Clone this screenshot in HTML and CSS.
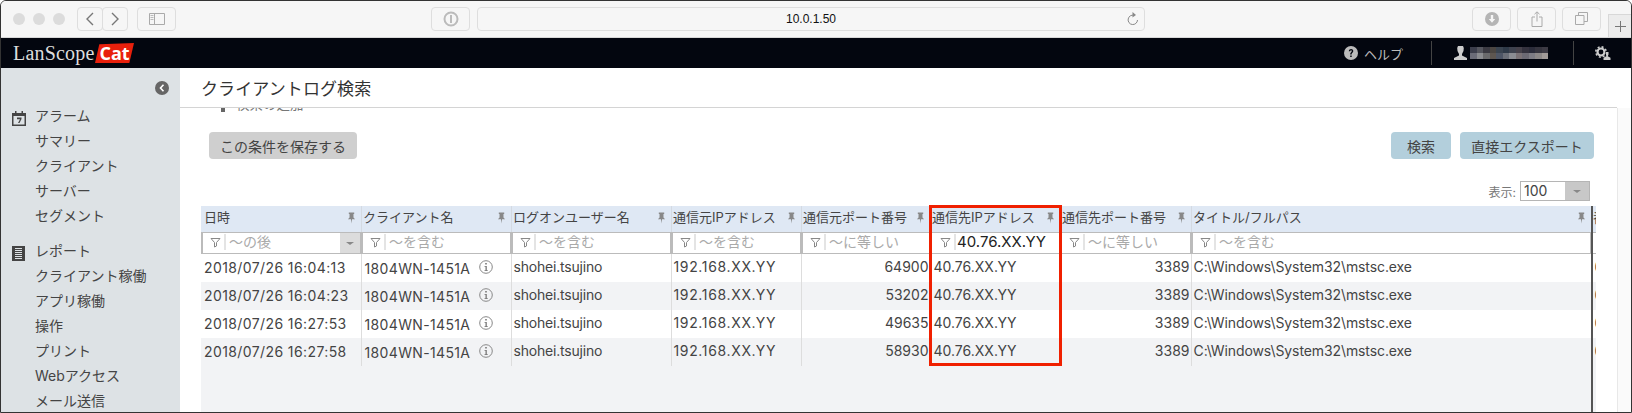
FILE: index.html
```html
<!DOCTYPE html>
<html lang="ja">
<head>
  <meta charset="UTF-8">
  <title>クライアントログ検索</title>
  <link rel="stylesheet" href="styles.css">
</head>
<body>
  <svg class="sprite" width="0" height="0">
    <symbol id="pin" viewBox="0 0 10 12"><path d="M2 0h6v1.500H7.200v4L9 7.500H5.600L5 12l-.6-4.500H1l1.800-2v-4H2z"/></symbol>
    <symbol id="funnel" viewBox="0 0 11 11"><path d="M1 1.500h9L6.500 5.500v3.500l-2 1V5.500z" fill="none" stroke="#888" stroke-width="1"/></symbol>
    <symbol id="info" viewBox="0 0 14 14"><circle cx="7" cy="7" r="6.300" fill="none" stroke="#888" stroke-width="1"/><path d="M6.200 3h1.600v1.500H6.200zM5.500 6h2.300v4.200h1V11h-3.300v-.8h1V6.800h-1z" fill="#777"/></symbol>
  </svg>

  <div class="window">
    <div class="toolbar">
      <div class="lights"><i></i><i></i><i></i></div>
      <div class="nav-buttons">
        <div class="tool-btn nav-btn"><svg width="10" height="16" viewBox="0 0 10 16"><path d="M8 2L2 8l6 6" fill="none" stroke="#777" stroke-width="1.400"/></svg></div>
        <div class="tool-btn nav-btn"><svg width="10" height="16" viewBox="0 0 10 16"><path d="M2 2l6 6-6 6" fill="none" stroke="#777" stroke-width="1.400"/></svg></div>
      </div>
      <div class="tool-btn side-btn"><svg width="16" height="12" viewBox="0 0 16 12"><path d="M.5.500h15v11H.5zM5.500.500v11" fill="none" stroke="#aaa"/><path d="M1.500 2.500h3M1.500 4.500h3M1.500 6.500h3" stroke="#bbb"/></svg></div>
      <div class="center-tools">
        <div class="tool-btn key-btn"><svg width="16" height="16" viewBox="0 0 16 16"><circle cx="8" cy="8" r="6.500" fill="none" stroke="#bbb" stroke-width="2"/><path d="M7 4h2v8H7z" fill="#bbb"/></svg></div>
        <div class="url-bar">
          <span class="url-text">10.0.1.50</span>
          <svg class="reload" width="12" height="15" viewBox="0 0 12 15"><path d="M7 3.300A4.700 4.700 0 1 0 10.500 8" fill="none" stroke="#888"/><path d="M5.500 0l3.500 3-3.500 2.500z" fill="#888"/></svg>
        </div>
      </div>
      <div class="right-tools">
        <div class="tool-btn"><svg width="14" height="14" viewBox="0 0 14 14"><circle cx="7" cy="7" r="7" fill="#b5b5b5"/><path d="M5.800 3h2.400v4h2L7 10.800 3.800 7h2z" fill="#f6f6f6"/></svg></div>
        <div class="tool-btn"><svg width="12" height="16" viewBox="0 0 12 16"><path d="M4 6H1v9.500h10V6H8M6 10.500V1M3.500 3.200L6 .8l2.500 2.400" fill="none" stroke="#aaa"/></svg></div>
        <div class="tool-btn"><svg width="13" height="13" viewBox="0 0 13 13"><path d="M.5 3.500h8.500v9H.5zM3.500 3.500v-3h9v9H9" fill="none" stroke="#aaa"/></svg></div>
      </div>
      <div class="new-tab"><svg width="11" height="11" viewBox="0 0 11 11"><path d="M5.500 0v11M0 5.500h11" stroke="#777"/></svg></div>
    </div>

    <div class="navbar">
      <div class="logo"><span class="logo-name">LanScope</span><span class="logo-cat">Cat</span></div>
      <div class="nav-right">
        <svg width="14" height="14" viewBox="0 0 14 14"><circle cx="7" cy="7" r="7" fill="#bbb"/><path d="M4.800 5.200c.1-3.100 4.500-3 4.500-.2 0 1.900-1.800 1.800-1.700 3.600H6.200C6 6.300 7.800 6.300 7.800 5c0-1-1.500-1-1.600.2zM6.200 9.500h1.500V11H6.200z" fill="#03060f"/></svg>
        <span class="help-text">ヘルプ</span>
        <span class="nav-sep sep-help"></span>
        <svg class="user-icon" width="15" height="14" viewBox="0 0 15 14"><path d="M5 0h5l.8 2-.3 3-1.500 3v1.500l5 2.500v2H1v-2l5-2.500V8L4.500 5l-.3-3z" fill="#ccc"/></svg>
        <svg class="mosaic" width="78" height="12" viewBox="0 0 12 2" preserveAspectRatio="none" shape-rendering="crispEdges">
          <rect width="12" height="2" fill="#33353f"/>
          <rect x="0" width="1" height="1" fill="#3c3e4c"/><rect x="1" width="1" height="1" fill="#55565e"/><rect x="2" width="1" height="1" fill="#3b3a42"/><rect x="3" width="1" height="1" fill="#4b4642"/><rect x="4" width="1" height="1" fill="#3a4450"/><rect x="5" width="1" height="1" fill="#2f3a48"/><rect x="6" width="1" height="1" fill="#3e424e"/><rect x="7" width="1" height="1" fill="#45414a"/><rect x="8" width="1" height="1" fill="#34323e"/><rect x="9" width="1" height="1" fill="#2b2c3a"/><rect x="10" width="1" height="1" fill="#35343e"/><rect x="11" width="1" height="1" fill="#3c3a44"/>
          <rect x="0" y="1" width="1" height="1" fill="#6b6c78"/><rect x="1" y="1" width="1" height="1" fill="#8b8c90"/><rect x="2" y="1" width="1" height="1" fill="#6a6a6c"/><rect x="3" y="1" width="1" height="1" fill="#5d5650"/><rect x="4" y="1" width="1" height="1" fill="#4e5666"/><rect x="5" y="1" width="1" height="1" fill="#6b6f78"/><rect x="6" y="1" width="1" height="1" fill="#8a8c92"/><rect x="7" y="1" width="1" height="1" fill="#7a7276"/><rect x="8" y="1" width="1" height="1" fill="#6c6a74"/><rect x="9" y="1" width="1" height="1" fill="#7d7c84"/><rect x="10" y="1" width="1" height="1" fill="#8c8888"/><rect x="11" y="1" width="1" height="1" fill="#a09a98"/>
        </svg>
        <span class="nav-sep sep-user"></span>
        <svg class="gear" width="16" height="14" viewBox="0 0 16 14">
          <circle cx="6" cy="6" r="3.500" fill="none" stroke="#ccc" stroke-width="2.200"/>
          <circle cx="6" cy="6" r="5.200" fill="none" stroke="#ccc" stroke-width="1.600" stroke-dasharray="2 2.080"/>
          <path d="M10.500 5.500h3v3l-.6 1.500 3.100 1.500V14H8v-2.500l3.100-1.500-.6-1.500z" fill="#03060f"/>
          <path d="M11 6h2.500v2.500l-.7 1.800 2.700 1.400V14h-7v-2.300l2.800-1.400-.3-1.800z" fill="#ccc"/>
        </svg>
      </div>
    </div>

    <div class="app">
      <aside class="sidebar">
        <div class="collapse"><svg width="14" height="14" viewBox="0 0 14 14"><circle cx="7" cy="7" r="7" fill="#666"/><path d="M8.500 3.800L5.500 7l3 3.200" fill="none" stroke="#fff" stroke-width="1.600"/></svg></div>
        <div class="menu-group">
          <div class="menu-title">
            <svg class="menu-icon" width="14" height="15" viewBox="0 0 14 15"><path d="M0 2h3V0h1.500v2h5V0H11v2h3v13H0zM1.500 5v8.500h11V5z" fill="#444"/><path d="M5 6.500h4.500V8L7.500 12H6l2-3.800H5z" fill="#444"/></svg>
            アラーム
          </div>
          <div class="menu-item">サマリー</div>
          <div class="menu-item">クライアント</div>
          <div class="menu-item">サーバー</div>
          <div class="menu-item">セグメント</div>
        </div>
        <div class="menu-group">
          <div class="menu-title">
            <svg class="menu-icon" width="13" height="15" viewBox="0 0 13 15"><path d="M0 0h13v15H0z" fill="#444"/><path d="M3 2.500h7M3 4.500h7M3 6.500h7M3 8.500h7M3 10.500h7M3 12.500h7" stroke="#dde2e5"/></svg>
            レポート
          </div>
          <div class="menu-item">クライアント稼働</div>
          <div class="menu-item">アプリ稼働</div>
          <div class="menu-item">操作</div>
          <div class="menu-item">プリント</div>
          <div class="menu-item">Webアクセス</div>
          <div class="menu-item">メール送信</div>
        </div>
      </aside>

      <main class="main">
        <h1 class="page-title">クライアントログ検索</h1>
        <div class="content">
          <div class="scrolled-line"><span class="bullet"></span><span class="scrolled-text">検索の追加</span></div>
          <div class="actions">
            <button class="btn btn-gray">この条件を保存する</button>
            <div class="actions-right">
              <button class="btn btn-blue btn-search">検索</button>
              <button class="btn btn-blue btn-export">直接エクスポート</button>
            </div>
          </div>
          <div class="page-size">
            <span>表示:</span>
            <div class="size-select"><span class="size-value">100</span><span class="size-arrow"></span></div>
          </div>

          <div class="grid-wrap">
            <div class="grid-clip">
              <table class="grid">
                <colgroup>
                  <col class="c-date"><col class="c-client"><col class="c-user"><col class="c-ip"><col class="c-port"><col class="c-dest"><col class="c-dport"><col class="c-title"><col class="c-rest">
                </colgroup>
                <thead>
                  <tr class="head-row">
                    <th>日時<svg class="pin"><use href="#pin"/></svg></th>
                    <th>クライアント名<svg class="pin"><use href="#pin"/></svg></th>
                    <th>ログオンユーザー名<svg class="pin"><use href="#pin"/></svg></th>
                    <th>通信元IPアドレス<svg class="pin"><use href="#pin"/></svg></th>
                    <th>通信元ポート番号<svg class="pin"><use href="#pin"/></svg></th>
                    <th>通信先IPアドレス<svg class="pin"><use href="#pin"/></svg></th>
                    <th>通信先ポート番号<svg class="pin"><use href="#pin"/></svg></th>
                    <th>タイトル/フルパス<svg class="pin"><use href="#pin"/></svg></th>
                    <th>番</th>
                  </tr>
                  <tr class="filter-row">
                    <td><div class="filter"><svg class="funnel"><use href="#funnel"/></svg><span>〜の後</span><i class="filter-drop"></i></div></td>
                    <td><div class="filter"><svg class="funnel"><use href="#funnel"/></svg><span>〜を含む</span></div></td>
                    <td><div class="filter"><svg class="funnel"><use href="#funnel"/></svg><span>〜を含む</span></div></td>
                    <td><div class="filter"><svg class="funnel"><use href="#funnel"/></svg><span>〜を含む</span></div></td>
                    <td><div class="filter"><svg class="funnel"><use href="#funnel"/></svg><span>〜に等しい</span></div></td>
                    <td><div class="filter filter-on"><svg class="funnel"><use href="#funnel"/></svg><span>40.76.XX.YY</span></div></td>
                    <td><div class="filter"><svg class="funnel"><use href="#funnel"/></svg><span>〜に等しい</span></div></td>
                    <td><div class="filter"><svg class="funnel"><use href="#funnel"/></svg><span>〜を含む</span></div></td>
                    <td><div class="filter"><span>番</span></div></td>
                  </tr>
                </thead>
                <tbody>
                  <tr>
                    <td class="date">2018/07/26 16:04:13</td>
                    <td class="client">1804WN-1451A<svg class="info"><use href="#info"/></svg></td>
                    <td class="user">shohei.tsujino</td>
                    <td class="src-ip">192.168.XX.YY</td>
                    <td class="num">64900</td>
                    <td>40.76.XX.YY</td>
                    <td class="num">3389</td>
                    <td class="path">C:\Windows\System32\mstsc.exe</td>
                    <td>6</td>
                  </tr>
                  <tr>
                    <td class="date">2018/07/26 16:04:23</td>
                    <td class="client">1804WN-1451A<svg class="info"><use href="#info"/></svg></td>
                    <td class="user">shohei.tsujino</td>
                    <td class="src-ip">192.168.XX.YY</td>
                    <td class="num">53202</td>
                    <td>40.76.XX.YY</td>
                    <td class="num">3389</td>
                    <td class="path">C:\Windows\System32\mstsc.exe</td>
                    <td>6</td>
                  </tr>
                  <tr>
                    <td class="date">2018/07/26 16:27:53</td>
                    <td class="client">1804WN-1451A<svg class="info"><use href="#info"/></svg></td>
                    <td class="user">shohei.tsujino</td>
                    <td class="src-ip">192.168.XX.YY</td>
                    <td class="num">49635</td>
                    <td>40.76.XX.YY</td>
                    <td class="num">3389</td>
                    <td class="path">C:\Windows\System32\mstsc.exe</td>
                    <td>6</td>
                  </tr>
                  <tr>
                    <td class="date">2018/07/26 16:27:58</td>
                    <td class="client">1804WN-1451A<svg class="info"><use href="#info"/></svg></td>
                    <td class="user">shohei.tsujino</td>
                    <td class="src-ip">192.168.XX.YY</td>
                    <td class="num">58930</td>
                    <td>40.76.XX.YY</td>
                    <td class="num">3389</td>
                    <td class="path">C:\Windows\System32\mstsc.exe</td>
                    <td>6</td>
                  </tr>
                </tbody>
              </table>
            </div>
            <div class="grid-edge"></div>
            <div class="highlight"></div>
          </div>
        </div>
      </main>
      <div class="scrollbar"></div>
    </div>
  </div>
</body>
</html>
```

FILE: styles.css
```css
* {
  box-sizing: border-box;
}
html, body {
  margin: 0;
  height: 100%;
  background: #fff;
}
body {
  font-family: Inter, "Noto Sans CJK JP", sans-serif;
  color: #444;
  overflow: hidden;
}
.sprite {
  position: absolute;
}
.window {
  height: 413px;
  border: 1px solid #333;
  border-radius: 6px 6px 0 0;
  display: flex;
  flex-direction: column;
  overflow: hidden;
}

/* browser toolbar */
.toolbar {
  height: 37px;
  flex-shrink: 0;
  background: #f6f6f6;
  border-bottom: 1px solid #d8d8d8;
  display: flex;
  align-items: center;
  padding: 0 0 1px 12px;
  position: relative;
}
.lights {
  display: flex;
  gap: 8px;
  width: 64px;
}
.lights i {
  width: 12px;
  height: 12px;
  border-radius: 50%;
  background: #dcdcdc;
}
.tool-btn {
  width: 39px;
  height: 24px;
  border: 1px solid #dedede;
  border-radius: 4px;
  display: flex;
  align-items: center;
  justify-content: center;
}
.nav-buttons {
  display: flex;
}
.nav-btn {
  width: 26px;
}
.nav-btn + .nav-btn {
  margin-left: -1px;
}
.side-btn {
  margin-left: 9px;
}
.center-tools {
  display: flex;
  gap: 7px;
  margin-left: 255px;
}
.url-bar {
  width: 668px;
  height: 24px;
  border: 1px solid #dedede;
  border-radius: 4px;
  display: flex;
  align-items: center;
  justify-content: center;
  position: relative;
}
.url-text {
  font-family: "Liberation Sans", sans-serif;
  font-size: 12px;
  color: #111;
}
.reload {
  position: absolute;
  right: 5px;
  top: 4px;
}
.right-tools {
  display: flex;
  gap: 6px;
  margin-left: 327px;
}
.new-tab {
  position: absolute;
  right: 0;
  top: 13px;
  width: 23px;
  height: 24px;
  background: #ececec;
  border: 1px solid #d8d8d8;
  border-right: 0;
  display: flex;
  align-items: center;
  justify-content: center;
}

/* app header */
.navbar {
  height: 30px;
  flex-shrink: 0;
  background: #03060f;
  display: flex;
  align-items: center;
  justify-content: space-between;
  padding: 0 20px 0 12px;
}
.logo {
  display: flex;
  align-items: center;
}
.logo-name {
  font-family: "Liberation Serif", serif;
  font-size: 20px;
  letter-spacing: .2px;
  color: #ddd;
  width: 82px;
}
.logo-cat {
  width: 39px;
  height: 20px;
  background: #e8200c;
  clip-path: polygon(11% 6%, 100% 0, 88% 100%, 0 100%);
  font-family: "Open Sans", sans-serif;
  font-size: 18px;
  font-weight: 700;
  line-height: 20px;
  text-align: center;
  color: #fff;
}
.nav-right {
  display: flex;
  align-items: center;
}
.help-text {
  font-size: 13px;
  color: #bbb;
  margin-left: 6px;
}
.nav-sep {
  width: 1px;
  height: 24px;
  background: #444;
}
.sep-help {
  margin: 0 21px 0 28px;
}
.user-icon {
  margin-right: 2px;
}
.sep-user {
  margin: 0 21px 0 25px;
}

/* sidebar */
.app {
  flex: 1;
  min-height: 0;
  display: flex;
}
.sidebar {
  width: 179px;
  flex-shrink: 0;
  background: #dde2e5;
  padding: 13px 10px 0 11px;
  overflow: hidden;
}
.collapse {
  display: flex;
  justify-content: flex-end;
  height: 22px;
  margin-right: 1px;
}
.menu-group {
  margin-bottom: 10px;
}
.menu-title,
.menu-item {
  height: 25px;
  line-height: 25px;
  font-size: 14px;
  padding-left: 23px;
  position: relative;
  white-space: nowrap;
}
.menu-icon {
  position: absolute;
  left: 0;
  top: 8px;
}

/* main area */
.main {
  flex: 1;
  min-width: 0;
  display: flex;
  flex-direction: column;
}
.page-title {
  margin: 0;
  height: 40px;
  flex-shrink: 0;
  padding: 9px 0 0 21px;
  font-size: 17px;
  letter-spacing: .1px;
  font-weight: 400;
  line-height: 24px;
  color: #333;
  border-bottom: 1px solid #d4d4d4;
}
.content {
  padding-left: 21px;
  flex: 1;
  min-height: 0;
}
.scrolled-line {
  height: 5px;
  overflow: hidden;
  display: flex;
  gap: 11px;
  padding-left: 20px;
}
.bullet {
  width: 4px;
  height: 4px;
  background: #666;
}
.scrolled-text {
  font-size: 13.500px;
  line-height: 14px;
  margin-top: -11px;
  color: #777;
}
.actions {
  display: flex;
  justify-content: space-between;
  margin: 19px 23px 0 8px;
}
.actions-right {
  display: flex;
  gap: 9px;
}
.btn {
  height: 27px;
  border: 0;
  border-radius: 4px;
  font-family: inherit;
  font-size: 14px;
  color: #444;
  padding: 0;
}
.btn-gray {
  width: 148px;
  background: #cfcfcf;
}
.btn-blue {
  background: #b3cfdc;
}
.btn-search {
  width: 60px;
}
.btn-export {
  width: 134px;
}
.page-size {
  display: flex;
  justify-content: flex-end;
  align-items: center;
  gap: 4px;
  margin: 22px 27px 0 0;
  font-size: 12px;
  color: #777;
}
.size-select {
  width: 70px;
  height: 20px;
  border: 1px solid #b5b5b5;
  display: flex;
  font-size: 14px;
  color: #444;
}
.size-value {
  flex: 1;
  line-height: 18px;
  padding-left: 3px;
}
.size-arrow {
  width: 24px;
  background: #c8c8c8;
  position: relative;
}
.size-arrow::after {
  content: "";
  position: absolute;
  left: 8px;
  top: 8px;
  border: 4px solid transparent;
  border-top: 3px solid #888;
  border-bottom: 0;
}

/* grid */
.grid-wrap {
  position: relative;
  width: 1395px;
  margin-top: 5px;
  height: 206px;
}
.grid-clip {
  height: 100%;
  overflow: hidden;
  background: #f2f3f5;
}
.grid {
  table-layout: fixed;
  border-collapse: collapse;
  width: 1490px;
  font-size: 14px;
  white-space: nowrap;
}
.c-date { width: 160px; }
.c-client { width: 150px; }
.c-user { width: 160px; }
.c-ip { width: 130px; }
.c-port { width: 129px; }
.c-dest { width: 130px; }
.c-dport { width: 131px; }
.c-title { width: 400px; }
.c-rest { width: 100px; }
.head-row th {
  height: 26px;
  background: #dfe8f4;
  font-size: 13px;
  font-weight: 400;
  text-align: left;
  padding: 0 0 6px 1.500px;
  color: #444;
  position: relative;
  border-left: 1px solid #d4dae2;
}
.head-row th:first-child {
  border-left: 0;
  padding-left: 3px;
}
.pin {
  position: absolute;
  right: 5px;
  top: 6px;
  width: 9px;
  height: 12px;
  fill: #888;
}
.filter-row td {
  height: 22px;
  padding: 0;
  background: #fff;
}
.filter {
  height: 22px;
  border: 2px solid #bbb;
  border-width: 1px 1px 1px 2px;
  display: flex;
  align-items: center;
  padding: 0 0 2px 7px;
  font-size: 14px;
  color: #aaa;
  position: relative;
  overflow: hidden;
}
.filter span {
  border-left: 2px solid #e4e4e4;
  padding-left: 3px;
  line-height: 16px;
}
.funnel {
  width: 11px;
  height: 11px;
  margin-right: 3px;
  flex-shrink: 0;
}
.filter-on {
  padding-left: 8px;
  color: #222;
  font-size: 15px;
}
.filter-on span {
  padding-left: 1px;
}
.filter-drop {
  position: absolute;
  right: 0;
  top: 0;
  width: 20px;
  height: 20px;
  background: #dcdcdc;
}
.filter-drop::after {
  content: "";
  position: absolute;
  left: 6px;
  top: 9px;
  border: 4px solid transparent;
  border-top: 3px solid #888;
  border-bottom: 0;
}
tbody td {
  height: 28px;
  padding: 0 0 3px 3px;
  border-left: 1px solid #ddd;
  background: #fff;
}
tbody td:first-child {
  border-left: 0;
}
tbody tr:nth-child(even) td {
  background: #f2f3f5;
}
td.date {
  padding-bottom: 2px;
  letter-spacing: .4px;
}
td.user {
  padding-left: 2px;
  letter-spacing: -.2px;
}
td.src-ip {
  padding-left: 2px;
  letter-spacing: .65px;
}
td.path {
  padding-left: 2px;
  letter-spacing: -.1px;
}
td.num {
  text-align: right;
  padding-left: 0;
  padding-right: 1px;
}
td.client {
  padding-top: 1px;
  padding-bottom: 1px;
  letter-spacing: .35px;
  position: relative;
}
.info {
  position: absolute;
  left: 117px;
  top: 6px;
  width: 14px;
  height: 14px;
}
.grid-edge {
  position: absolute;
  left: 1390px;
  top: 0;
  bottom: 0;
  width: 2px;
  background: #555;
}
.highlight {
  position: absolute;
  left: 728px;
  top: -1px;
  width: 133px;
  height: 161px;
  border: 3px solid #f02000;
}
.scrollbar {
  width: 14px;
  flex-shrink: 0;
  margin-top: 40px;
  background: #fafafa;
  border-left: 1px solid #e8e8e8;
}
```
